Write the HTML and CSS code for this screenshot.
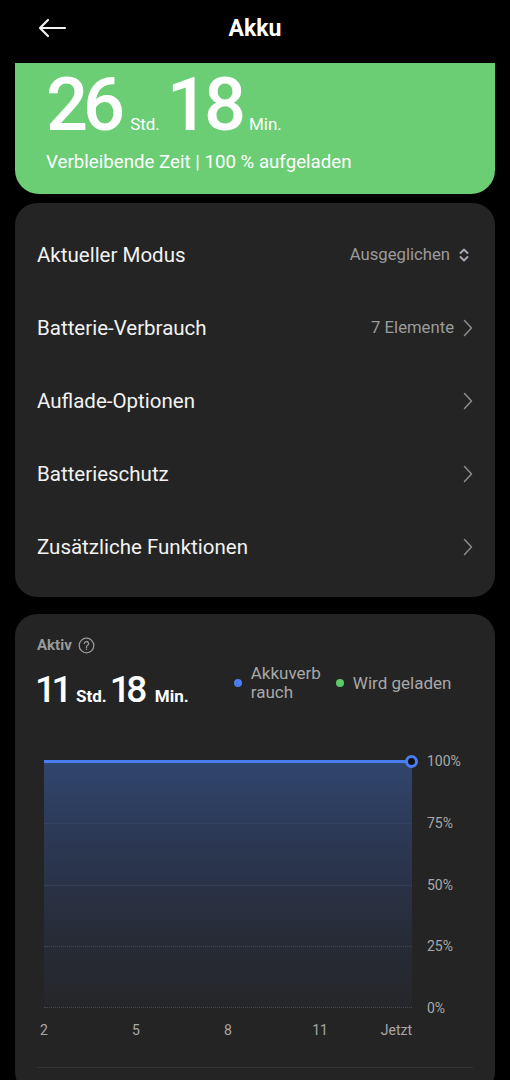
FILE: index.html
```html
<!DOCTYPE html>
<html lang="de">
<head>
<meta charset="utf-8">
<title>Akku</title>
<link rel="stylesheet" href="styles.css">
</head>
<body>
<header class="topbar">
  <svg class="back" width="30" height="20" viewBox="0 0 30 20"><path d="M28 10H3M11 2L3 10l8 8" fill="none" stroke="#f2f2f2" stroke-width="2.2" stroke-linecap="round" stroke-linejoin="round"/></svg>
  <h1 class="title">Akku</h1>
  <span></span>
</header>

<section class="hero">
  <div class="remaining">
    <span class="big">26</span><span class="unit">Std.</span><span class="big">18</span><span class="unit">Min.</span>
  </div>
  <p class="hero-sub">Verbleibende Zeit | 100 % aufgeladen</p>
</section>

<section class="card menu">
  <div class="row">
    <span class="label">Aktueller Modus</span>
    <span class="value">Ausgeglichen
      <svg class="updown" width="10" height="16" viewBox="0 0 10 16"><path d="M1.5 6L5 2.5 8.5 6M1.5 10L5 13.5 8.5 10" fill="none" stroke="#a8a8b8" stroke-width="1.8" stroke-linecap="round" stroke-linejoin="round"/></svg>
    </span>
  </div>
  <div class="row">
    <span class="label">Batterie-Verbrauch</span>
    <span class="value">7 Elemente
      <svg class="chev" width="10" height="18" viewBox="0 0 10 18"><path d="M1.5 1.5L8.5 9l-7 7.5" fill="none" stroke="#8c8c8c" stroke-width="1.5" stroke-linecap="round" stroke-linejoin="round"/></svg>
    </span>
  </div>
  <div class="row">
    <span class="label">Auflade-Optionen</span>
    <span class="value">
      <svg class="chev" width="10" height="18" viewBox="0 0 10 18"><path d="M1.5 1.5L8.5 9l-7 7.5" fill="none" stroke="#8c8c8c" stroke-width="1.5" stroke-linecap="round" stroke-linejoin="round"/></svg>
    </span>
  </div>
  <div class="row">
    <span class="label">Batterieschutz</span>
    <span class="value">
      <svg class="chev" width="10" height="18" viewBox="0 0 10 18"><path d="M1.5 1.5L8.5 9l-7 7.5" fill="none" stroke="#8c8c8c" stroke-width="1.5" stroke-linecap="round" stroke-linejoin="round"/></svg>
    </span>
  </div>
  <div class="row">
    <span class="label">Zusätzliche Funktionen</span>
    <span class="value">
      <svg class="chev" width="10" height="18" viewBox="0 0 10 18"><path d="M1.5 1.5L8.5 9l-7 7.5" fill="none" stroke="#8c8c8c" stroke-width="1.5" stroke-linecap="round" stroke-linejoin="round"/></svg>
    </span>
  </div>
</section>

<section class="card stats">
  <div class="stats-head">Aktiv
    <svg class="help" width="17" height="17" viewBox="0 0 17 17"><circle cx="8.5" cy="8.5" r="7.3" fill="none" stroke="#9a9a9a" stroke-width="1.3"/><path d="M6.4 6.6a2.1 2.1 0 1 1 3 1.9c-.6.3-.9.7-.9 1.4v.5" fill="none" stroke="#9a9a9a" stroke-width="1.3" stroke-linecap="round"/><circle cx="8.5" cy="12.3" r=".8" fill="#9a9a9a"/></svg>
  </div>
  <div class="stats-row">
    <div class="active-time">
      <span class="num">11</span><span class="u">Std.</span><span class="num">18</span><span class="u">Min.</span>
    </div>
    <div class="legend">
      <div class="leg"><i class="dot blue"></i><span>Akkuverb<br>rauch</span></div>
      <div class="leg"><i class="dot green"></i><span>Wird geladen</span></div>
    </div>
  </div>

  <div class="chart">
    <div class="plot">
      <div class="line top"></div>
      <div class="line"></div>
      <div class="line"></div>
      <div class="line"></div>
      <div class="line"></div>
      <span class="endpoint"></span>
    </div>
    <div class="ylabels">
      <span>100%</span><span>75%</span><span>50%</span><span>25%</span><span>0%</span>
    </div>
    <div class="xlabels">
      <span class="tick"><b>2</b></span>
      <span class="tick"><b>5</b></span>
      <span class="tick"><b>8</b></span>
      <span class="tick"><b>11</b></span>
      <span class="tick last"><b>Jetzt</b></span>
    </div>
  </div>
  <div class="divider"></div>
</section>
</body>
</html>
```

FILE: styles.css
```css
* { box-sizing: border-box; }
html, body { margin: 0; padding: 0; }
body {
  width: 510px;
  min-height: 1080px;
  background: #000;
  font-family: Roboto, "Noto Sans", "Liberation Sans", sans-serif;
  color: #f2f2f2;
  overflow: hidden;
}

.topbar {
  height: 63px;
  display: grid;
  grid-template-columns: 1fr auto 1fr;
  align-items: center;
  padding: 0 37px 7px;
}
.back { display: block; }
.title {
  margin: 0;
  font-size: 23px;
  font-weight: 700;
  color: #fff;
}

.hero {
  margin: 0 15px;
  height: 131px;
  background: #6bce75;
  border-radius: 0 0 24px 24px;
  padding: 3px 0 0 31px;
  color: #fff;
}
.remaining {
  display: flex;
  align-items: baseline;
  height: 78px;
  line-height: 78px;
}
.remaining .big {
  font-size: 74px;
  font-weight: 500;
  letter-spacing: -5px;
}
.remaining .unit {
  font-size: 17px;
  margin: 0 7px 0 10px;
}
.remaining .unit:last-child { margin-left: 8px; }
.hero-sub {
  margin: 7px 0 0;
  font-size: 18.7px;
  line-height: 22px;
}

.card {
  margin: 9px 15px 0;
  background: #242424;
  border-radius: 22px;
}
.menu { padding: 15px 22px 14px; }
.row {
  height: 73px;
  display: flex;
  align-items: center;
  justify-content: space-between;
}
.label {
  font-size: 20.5px;
  color: #f2f2f2;
}
.value {
  display: flex;
  align-items: center;
  gap: 9px;
  font-size: 16.7px;
  color: #9b9b9b;
}
.updown { margin-right: 4px; }

.stats {
  margin-top: 17px;
  padding: 22px 22px 14px;
  min-height: 480px;
}
.stats-head {
  display: flex;
  align-items: center;
  gap: 6px;
  font-size: 15px;
  font-weight: 700;
  line-height: 18px;
  color: #9a9a9a;
}
.stats-row {
  display: flex;
  align-items: flex-start;
  margin-top: 10px;
}
.active-time {
  display: flex;
  align-items: baseline;
  line-height: 44px;
  margin: 4px 0 0 -2px;
  color: #fff;
}
.active-time .num {
  font-size: 37px;
  font-weight: 500;
  letter-spacing: -4.5px;
}
.active-time .u {
  font-size: 17px;
  font-weight: 700;
  margin: 0 3px 0 8px;
}
.active-time .u:last-child { margin: 0 0 0 12px; }
.legend {
  display: flex;
  align-items: center;
  gap: 15px;
  margin-left: 45px;
  font-size: 17px;
  line-height: 19px;
  color: #a8a8a8;
}
.leg {
  display: flex;
  align-items: center;
  gap: 9px;
}
.dot {
  display: block;
  width: 8px;
  height: 8px;
  border-radius: 50%;
}
.dot.blue { background: #4a7df0; }
.dot.green { background: #5ccb66; }

.chart {
  display: grid;
  grid-template-columns: 368px 1fr;
  column-gap: 15px;
  margin: 42px 0 0 7px;
}
.plot {
  position: relative;
  height: 248px;
  display: flex;
  flex-direction: column;
  justify-content: space-between;
  background: linear-gradient(180deg, #31466e 0%, #2b3752 35%, #272c38 70%, #252629 100%);
}
.line {
  height: 1px;
  border-top: 1px dotted #404859;
}
.line.top {
  height: 3px;
  border: 0;
  background: #4a7df0;
}
.endpoint {
  position: absolute;
  right: -6px;
  top: -5px;
  width: 13px;
  height: 13px;
  border-radius: 50%;
  border: 3px solid #4a7df0;
  background: #111;
}
.ylabels {
  margin: -7px 0 -8px;
  display: flex;
  flex-direction: column;
  justify-content: space-between;
  font-size: 14px;
  line-height: 16px;
  color: #a8a8a8;
}
.xlabels {
  grid-column: 1;
  display: flex;
  justify-content: space-between;
  margin-top: 14px;
  font-size: 14px;
  line-height: 16px;
  color: #a8a8a8;
}
.tick {
  width: 0;
  display: flex;
  justify-content: center;
}
.tick b { font-weight: 400; white-space: nowrap; }
.tick.last { justify-content: flex-end; }

.divider {
  margin-top: 29px;
  height: 1px;
  background: #343434;
}
```
